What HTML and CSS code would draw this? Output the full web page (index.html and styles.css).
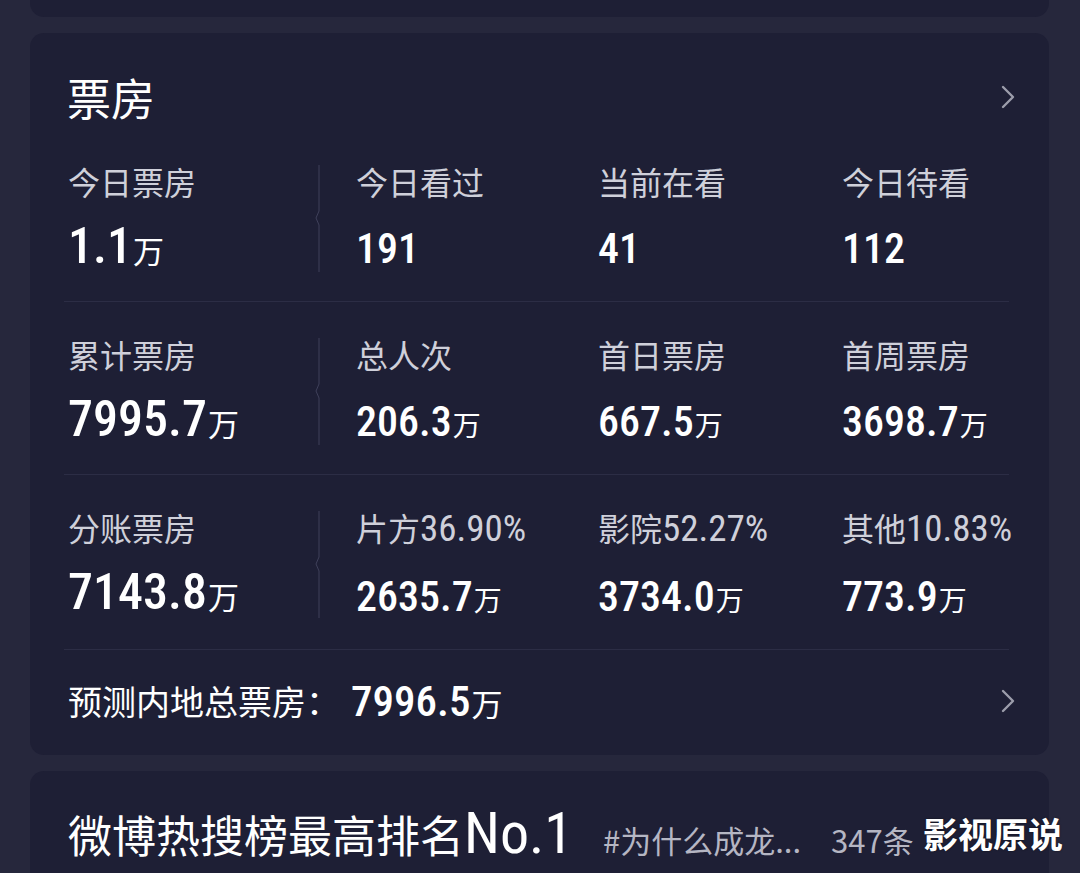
FILE: index.html
```html
<!DOCTYPE html>
<html lang="zh-CN">
<head>
    <meta charset="UTF-8">
    <meta name="viewport" content="width=device-width, initial-scale=1.0">
    <title>票房</title>
    <link rel="stylesheet" href="styles.css">
</head>
<body>
    <div class="page">
        <div class="card card-prev"></div>

        <section class="card box">
            <div class="box-head">
                <h2 class="box-title">票房</h2>
                <svg class="chev" viewBox="0 0 14 24"><path d="M2 2 L12 12 L2 22"/></svg>
            </div>

            <div class="stats">
                <div class="stat">
                    <div class="label">今日票房</div>
                    <div class="value lead"><span class="num">1.1</span><span class="unit">万</span></div>
                </div>
                <div class="sep"><svg viewBox="0 0 8 107"><path d="M5 0 V46 L2 53 L5 60 V107"/></svg></div>
                <div class="stat">
                    <div class="label">今日看过</div>
                    <div class="value"><span class="num">191</span></div>
                </div>
                <div class="stat">
                    <div class="label">当前在看</div>
                    <div class="value"><span class="num">41</span></div>
                </div>
                <div class="stat">
                    <div class="label">今日待看</div>
                    <div class="value"><span class="num">112</span></div>
                </div>
            </div>

            <div class="stats">
                <div class="stat">
                    <div class="label">累计票房</div>
                    <div class="value lead"><span class="num">7995.7</span><span class="unit">万</span></div>
                </div>
                <div class="sep"><svg viewBox="0 0 8 107"><path d="M5 0 V46 L2 53 L5 60 V107"/></svg></div>
                <div class="stat">
                    <div class="label">总人次</div>
                    <div class="value"><span class="num">206.3</span><span class="unit">万</span></div>
                </div>
                <div class="stat">
                    <div class="label">首日票房</div>
                    <div class="value"><span class="num">667.5</span><span class="unit">万</span></div>
                </div>
                <div class="stat">
                    <div class="label">首周票房</div>
                    <div class="value"><span class="num">3698.7</span><span class="unit">万</span></div>
                </div>
            </div>

            <div class="stats">
                <div class="stat">
                    <div class="label">分账票房</div>
                    <div class="value lead"><span class="num">7143.8</span><span class="unit">万</span></div>
                </div>
                <div class="sep"><svg viewBox="0 0 8 107"><path d="M5 0 V46 L2 53 L5 60 V107"/></svg></div>
                <div class="stat">
                    <div class="label">片方<span class="pct">36.90%</span></div>
                    <div class="value"><span class="num">2635.7</span><span class="unit">万</span></div>
                </div>
                <div class="stat">
                    <div class="label">影院<span class="pct">52.27%</span></div>
                    <div class="value"><span class="num">3734.0</span><span class="unit">万</span></div>
                </div>
                <div class="stat">
                    <div class="label">其他<span class="pct">10.83%</span></div>
                    <div class="value"><span class="num">773.9</span><span class="unit">万</span></div>
                </div>
            </div>

            <div class="forecast">
                <span class="forecast-label">预测内地总票房：</span>
                <span class="forecast-num">7996.5<span class="unit">万</span></span>
                <svg class="chev" viewBox="0 0 14 24"><path d="M2 2 L12 12 L2 22"/></svg>
            </div>
        </section>

        <section class="card hot">
            <div class="hot-line">
                <span class="hot-title">微博热搜榜最高排名<span class="hot-no">No.1</span></span>
                <span class="hot-topic">#为什么成龙...</span>
                <span class="hot-count">347条</span>
            </div>
            <div class="watermark">影视原说</div>
        </section>
    </div>
</body>
</html>
```

FILE: styles.css
```css
body {
    margin: 0;
    background-color: #26273c;
    color: #ffffff;
    font-family: "Noto Sans CJK SC", sans-serif;
    overflow: hidden;
}
.page {
    padding: 0 31px 0 30px;
}
.card {
    background-color: #1e1f35;
    border-radius: 14px;
}
.card-prev {
    height: 17px;
    border-radius: 0 0 14px 14px;
    margin-bottom: 16px;
}
.box {
    padding: 42px 0 37px;
    margin-bottom: 16px;
}
.box-head {
    display: flex;
    align-items: center;
    justify-content: space-between;
    padding: 0 34px 0 37px;
    margin-bottom: 10px;
}
.box-title {
    margin: 0;
    font-size: 44px;
    line-height: 44px;
    font-weight: 400;
}
.chev {
    width: 14px;
    height: 24px;
    flex-shrink: 0;
}
.chev path {
    fill: none;
    stroke: #9c9dab;
    stroke-width: 2.4;
    stroke-linecap: round;
    stroke-linejoin: round;
}
.stats {
    display: grid;
    grid-template-columns: 246px 42px 242px 244px 1fr;
    margin: 0 40px 0 34px;
    padding: 36px 0 29px 4px;
    border-bottom: 1px solid #2c2d45;
}
.label {
    font-size: 32px;
    line-height: 32px;
    color: #cfd0da;
    white-space: nowrap;
}
.pct,
.value,
.forecast-num,
.hot-no {
    font-family: "Roboto Condensed", "Noto Sans", "Roboto", sans-serif;
    font-stretch: semi-condensed;
}
.hot-no {
    font-stretch: condensed;
}
.pct {
    font-size: 37px;
    line-height: 32px;
}
.value {
    margin-top: 19px;
    font-size: 56px;
    line-height: 56px;
    white-space: nowrap;
}
.num {
    font-size: 42px;
    line-height: 1;
    font-weight: 500;
}
.value .unit {
    font-size: 28px;
}
.value.lead .num {
    font-size: 50px;
}
.value.lead .unit {
    font-size: 31px;
}
.unit {
    font-family: "Noto Sans CJK SC", sans-serif;
    font-stretch: normal;
    font-weight: 400;
    line-height: 1;
    margin-left: 1px;
}
.sep svg {
    width: 8px;
    height: 107px;
    display: block;
}
.sep path {
    fill: none;
    stroke: #3f405a;
    stroke-width: 1;
}
.forecast {
    display: flex;
    align-items: center;
    margin: 0 34px 0 34px;
    padding: 34px 0 0 4px;
    line-height: 34px;
}
.forecast-label {
    font-size: 34px;
}
.forecast-num {
    font-size: 43px;
    font-weight: 500;
    margin-left: 11px;
}
.forecast-num .unit {
    font-size: 31px;
}
.forecast .chev {
    margin-left: auto;
}
.hot {
    position: relative;
    height: 200px;
    padding: 40px 0 0 38px;
}
.hot-line {
    display: flex;
    align-items: baseline;
    white-space: nowrap;
}
.hot-title {
    font-size: 44px;
    line-height: 44px;
}
.hot-no {
    font-size: 58px;
}
.hot-topic {
    margin-left: 30px;
    font-size: 31px;
    color: #b5b6c3;
}
.hot-count {
    margin-left: 30px;
    font-size: 31px;
    color: #b5b6c3;
}
.watermark {
    position: absolute;
    left: 893px;
    top: 44px;
    font-size: 35px;
    line-height: 35px;
    font-weight: 700;
    color: #ffffff;
    white-space: nowrap;
    text-shadow: 0 0 2px rgba(0, 0, 0, 0.6);
}
```
